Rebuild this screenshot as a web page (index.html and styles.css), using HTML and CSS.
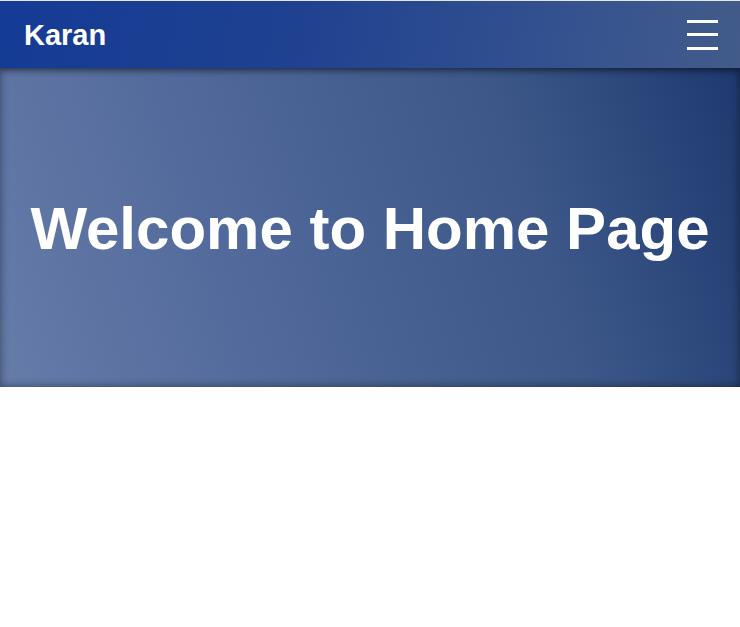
FILE: index.html
```html
<!DOCTYPE html>
<html lang="en">
<head>
<meta charset="utf-8">
<title>Karan</title>
<link rel="stylesheet" href="styles.css">
</head>
<body>
<header class="navbar">
  <div class="brand">Karan</div>
  <button class="menu" aria-label="Menu">
    <span class="bar"></span>
    <span class="bar"></span>
    <span class="bar"></span>
  </button>
</header>
<section class="hero">
  <h1 class="hero-title">Welcome to Home Page</h1>
</section>
</body>
</html>
```

FILE: styles.css
```css
* { box-sizing: border-box; }
html, body { margin: 0; padding: 0; background: #ffffff; }
body {
  font-family: "Liberation Sans", Arial, sans-serif;
  border-top: 1px solid #e6e6e6;
}
.navbar {
  position: relative;
  z-index: 2;
  height: 67px;
  display: flex;
  align-items: center;
  justify-content: space-between;
  padding: 0 22px 0 24px;
  background: linear-gradient(100deg, #143b95 0%, #1f4190 40%, #37548f 80%, #425b89 100%);
  box-shadow: 0 2px 6px rgba(0, 0, 0, 0.35);
}
.brand {
  color: #ffffff;
  font-weight: bold;
  font-size: 29px;
  line-height: 1;
  padding-top: 1px;
}
.menu {
  display: flex;
  flex-direction: column;
  gap: 10.5px;
  padding: 0;
  border: 0;
  background: none;
  width: 31px;
}
.bar {
  display: block;
  width: 31px;
  height: 3px;
  background: #ffffff;
}
.hero {
  height: 319px;
  display: flex;
  align-items: center;
  justify-content: center;
  background: linear-gradient(72deg, #667ca9 0%, #50689a 35%, #3c5788 70%, #1e396f 100%);
  box-shadow: inset 0 0 10px rgba(0, 0, 0, 0.45);
}
.hero-title {
  margin: 0;
  color: #ffffff;
  font-weight: bold;
  font-size: 60px;
  line-height: 1;
  text-align: center;
  padding-top: 2px;
}
```
